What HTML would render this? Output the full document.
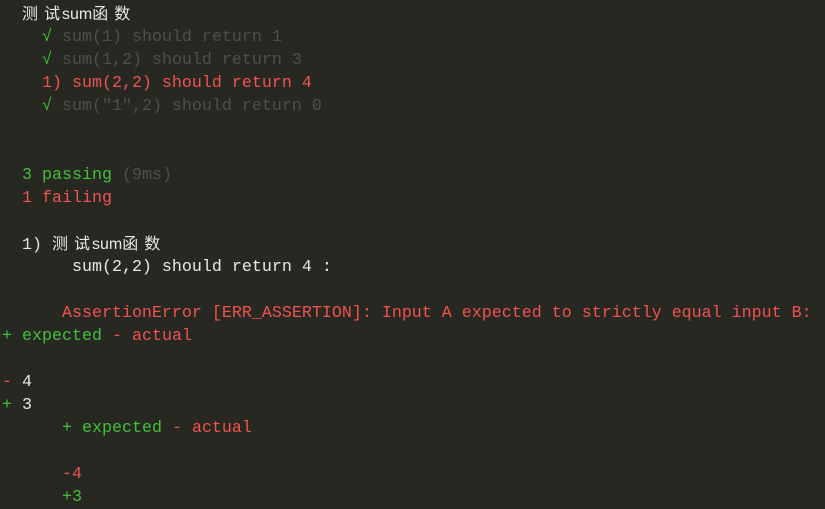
<!DOCTYPE html>
<html><head><meta charset="utf-8"><style>
body{margin:0;background:#272822;width:825px;height:507px;overflow:hidden}
.l{position:absolute;left:2px;white-space:pre;font-family:"Liberation Mono",monospace;font-size:16.67px;line-height:23px;height:23px;color:#e0e0e0}
.cj{font-family:"Liberation Sans","Noto Sans CJK SC",sans-serif;font-size:16px}
.cj i{font-style:normal;margin-right:6px}
.g{color:#4e4e4a}.gr{color:#41c13a}.r{color:#f0524f}.w{color:#e8e8e8}.b{color:#d6e4f0}
</style></head><body>
<div class="l" style="top:3px">  <span class="cj w"><i>测</i><i style="margin-right:2px">试</i>sum<i>函</i>数</span></div>
<div class="l" style="top:26px">    <span class="gr">√</span> <span class="g">sum(1) should return 1</span></div>
<div class="l" style="top:49px">    <span class="gr">√</span> <span class="g">sum(1,2) should return 3</span></div>
<div class="l r" style="top:72px">    1) sum(2,2) should return 4</div>
<div class="l" style="top:95px">    <span class="gr">√</span> <span class="g">sum("1",2) should return 0</span></div>
<div class="l" style="top:164px">  <span class="gr">3 passing</span> <span class="g">(9ms)</span></div>
<div class="l r" style="top:187px">  1 failing</div>
<div class="l b" style="top:233px">  1) <span class="cj w"><i>测</i><i style="margin-right:2px">试</i>sum<i>函</i>数</span></div>
<div class="l w" style="top:256px">       sum(2,2) should return 4 :</div>
<div class="l r" style="top:302px">      AssertionError [ERR_ASSERTION]: Input A expected to strictly equal input B:</div>
<div class="l" style="top:325px"><span class="gr">+ expected</span> <span class="r">- actual</span></div>
<div class="l w" style="top:371px"><span class="r">-</span> 4</div>
<div class="l w" style="top:394px"><span class="gr">+</span> 3</div>
<div class="l" style="top:417px">      <span class="gr">+ expected</span> <span class="r">- actual</span></div>
<div class="l r" style="top:463px">      -4</div>
<div class="l gr" style="top:486px">      +3</div>
</body></html>
